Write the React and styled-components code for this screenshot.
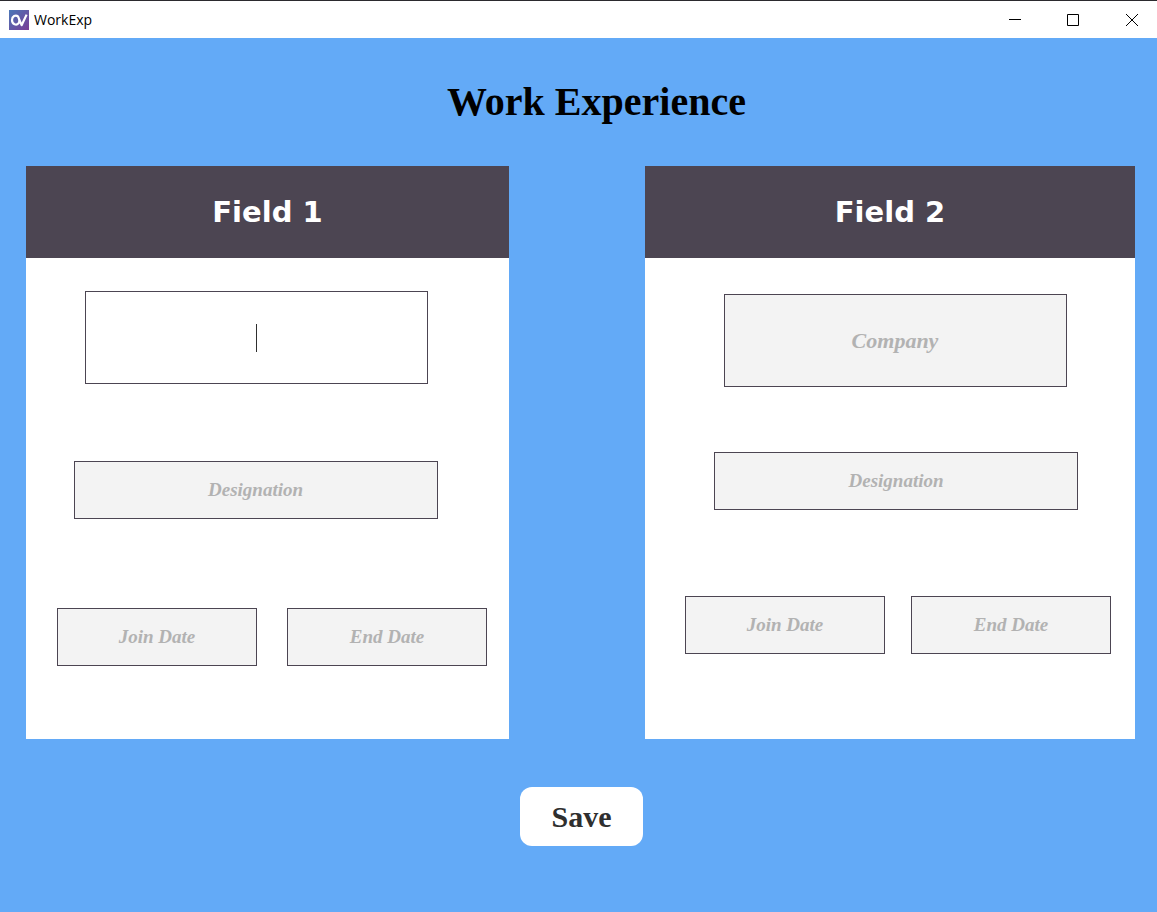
import React from 'react';
import styled, { createGlobalStyle } from 'styled-components';

const GlobalStyle = createGlobalStyle`
  *, *::before, *::after { box-sizing: border-box; }
  body { margin: 0; background: #63aaf7; }
  button, input { font: inherit; margin: 0; }
`;

const serif = '"Liberation Serif", "Times New Roman", serif';

const Window = styled.div`
  min-height: 100vh;
  display: flex;
  flex-direction: column;
  background: #63aaf7;
  font-family: ${serif};
`;

const TitleBar = styled.header`
  display: flex;
  align-items: center;
  height: 38px;
  padding-left: 9px;
  background: #ffffff;
  border-top: 1px solid #2b2a2e;
`;

const AppName = styled.span`
  flex: 1;
  margin-left: 5px;
  font: 14px/20px "Open Sans", "Segoe UI", sans-serif;
  color: #000000;
`;

const WindowButton = styled.button`
  display: flex;
  align-items: center;
  justify-content: center;
  width: 58px;
  height: 35px;
  padding: 0;
  border: 0;
  background: transparent;
  color: #000000;

  &:last-child { width: 50px; margin-left: 5px; }
  &:hover { background: #e5e5e5; }
`;

const Page = styled.main`
  flex: 1;
  display: flex;
  flex-direction: column;
  align-items: center;
  padding: 40px 22px 64px 26px;
`;

const Title = styled.h1`
  margin: 0 0 40px;
  padding-left: 32px;
  font-size: 40px;
  line-height: 48px;
  font-weight: 700;
  color: #000000;
`;

const Cards = styled.div`
  align-self: stretch;
  display: grid;
  grid-template-columns: 483fr 490fr;
  column-gap: 136px;
`;

const Card = styled.section`
  display: flex;
  flex-direction: column;
  background: #ffffff;
`;

const CardHeader = styled.h2`
  margin: 0;
  padding: 24px 0;
  background: #4c4552;
  color: #ffffff;
  text-align: center;
  font: 700 29px/44px "DejaVu Sans", "Arial Black", sans-serif;
`;

const CardBody = styled.div`
  display: flex;
  flex-direction: column;
  padding: ${(p) => p.$padding};
`;

const Row = styled.div`
  display: flex;
  justify-content: ${(p) => (p.$spread ? 'space-between' : 'center')};
  padding: ${(p) => p.$padding};
`;

const Field = styled.input`
  width: ${(p) => p.$width}px;
  min-width: 0;
  height: ${(p) => (p.$large ? 93 : 58)}px;
  padding: 0 8px;
  border: 1px solid #4c4552;
  border-radius: 0;
  outline: 0;
  background: #f3f3f3;
  color: #2f2f2f;
  text-align: center;
  font-size: ${(p) => (p.$large ? 22 : 19)}px;
  font-weight: 700;
  font-style: italic;

  &::placeholder { color: #b2b2b2; opacity: 1; }
`;

const ActiveField = styled(Field)`
  background: #ffffff;
  caret-color: transparent;

  &:placeholder-shown {
    background: linear-gradient(#2f2f2f, #2f2f2f) center / 1px 28px no-repeat #ffffff;
  }
  &:not(:placeholder-shown) { caret-color: #2f2f2f; }
`;

const SaveButton = styled.button`
  width: 123px;
  height: 59px;
  margin: 48px 0 0 2px;
  padding: 0;
  border: 0;
  border-radius: 12px;
  background: #ffffff;
  color: #2f2f2f;
  font-size: 30px;
  font-weight: 700;
`;

function Logo() {
  return (
    <svg width="20" height="20" viewBox="0 0 20 20" aria-hidden="true">
      <defs>
        <linearGradient id="logoFill" x1="0" y1="0" x2="1" y2="1">
          <stop offset="0" stopColor="#4a78b8" />
          <stop offset="1" stopColor="#7a3d96" />
        </linearGradient>
      </defs>
      <rect width="20" height="20" fill="url(#logoFill)" />
      <path
        d="M9 6.400C6.600 4.400 3 6.200 3 10c0 4.600 4.600 5.800 6.600 3.200C10.600 11.800 10.400 9 9 6.400L12.600 15.200L17.600 4.600"
        fill="none"
        stroke="#ffffff"
        strokeWidth="2.200"
        strokeLinejoin="round"
      />
    </svg>
  );
}

function Glyph({ d }) {
  return (
    <svg width="12" height="12" viewBox="0 0 12 12" aria-hidden="true">
      <path d={d} fill="none" stroke="currentColor" strokeWidth="1" />
    </svg>
  );
}

export default function App() {
  return (
    <Window>
      <GlobalStyle />
      <TitleBar>
        <Logo />
        <AppName>WorkExp</AppName>
        <WindowButton type="button" aria-label="Minimize">
          <Glyph d="M0 5.5H12" />
        </WindowButton>
        <WindowButton type="button" aria-label="Maximize">
          <Glyph d="M.5 .5H11.5V11.5H.5Z" />
        </WindowButton>
        <WindowButton type="button" aria-label="Close">
          <Glyph d="M0 0L12 12M12 0L0 12" />
        </WindowButton>
      </TitleBar>
      <Page>
        <Title>Work Experience</Title>
        <Cards>
          <Card>
            <CardHeader>Field 1</CardHeader>
            <CardBody $padding="33px 0 73px">
              <Row $padding="0 22px 77px 0">
                <ActiveField $large $width={343} placeholder=" " aria-label="Company 1" />
              </Row>
              <Row $padding="0 24px 89px 0">
                <Field $width={364} placeholder="Designation" aria-label="Designation 1" />
              </Row>
              <Row $spread $padding="0 22px 0 31px">
                <Field $width={200} placeholder="Join Date" aria-label="Join date 1" />
                <Field $width={200} placeholder="End Date" aria-label="End date 1" />
              </Row>
            </CardBody>
          </Card>
          <Card>
            <CardHeader>Field 2</CardHeader>
            <CardBody $padding="36px 0 84px">
              <Row $padding="0 0 65px 10px">
                <Field $large $width={343} placeholder="Company" aria-label="Company 2" />
              </Row>
              <Row $padding="0 0 86px 12px">
                <Field $width={364} placeholder="Designation" aria-label="Designation 2" />
              </Row>
              <Row $spread $padding="0 24px 0 40px">
                <Field $width={200} placeholder="Join Date" aria-label="Join date 2" />
                <Field $width={200} placeholder="End Date" aria-label="End date 2" />
              </Row>
            </CardBody>
          </Card>
        </Cards>
        <SaveButton type="button">Save</SaveButton>
      </Page>
    </Window>
  );
}
